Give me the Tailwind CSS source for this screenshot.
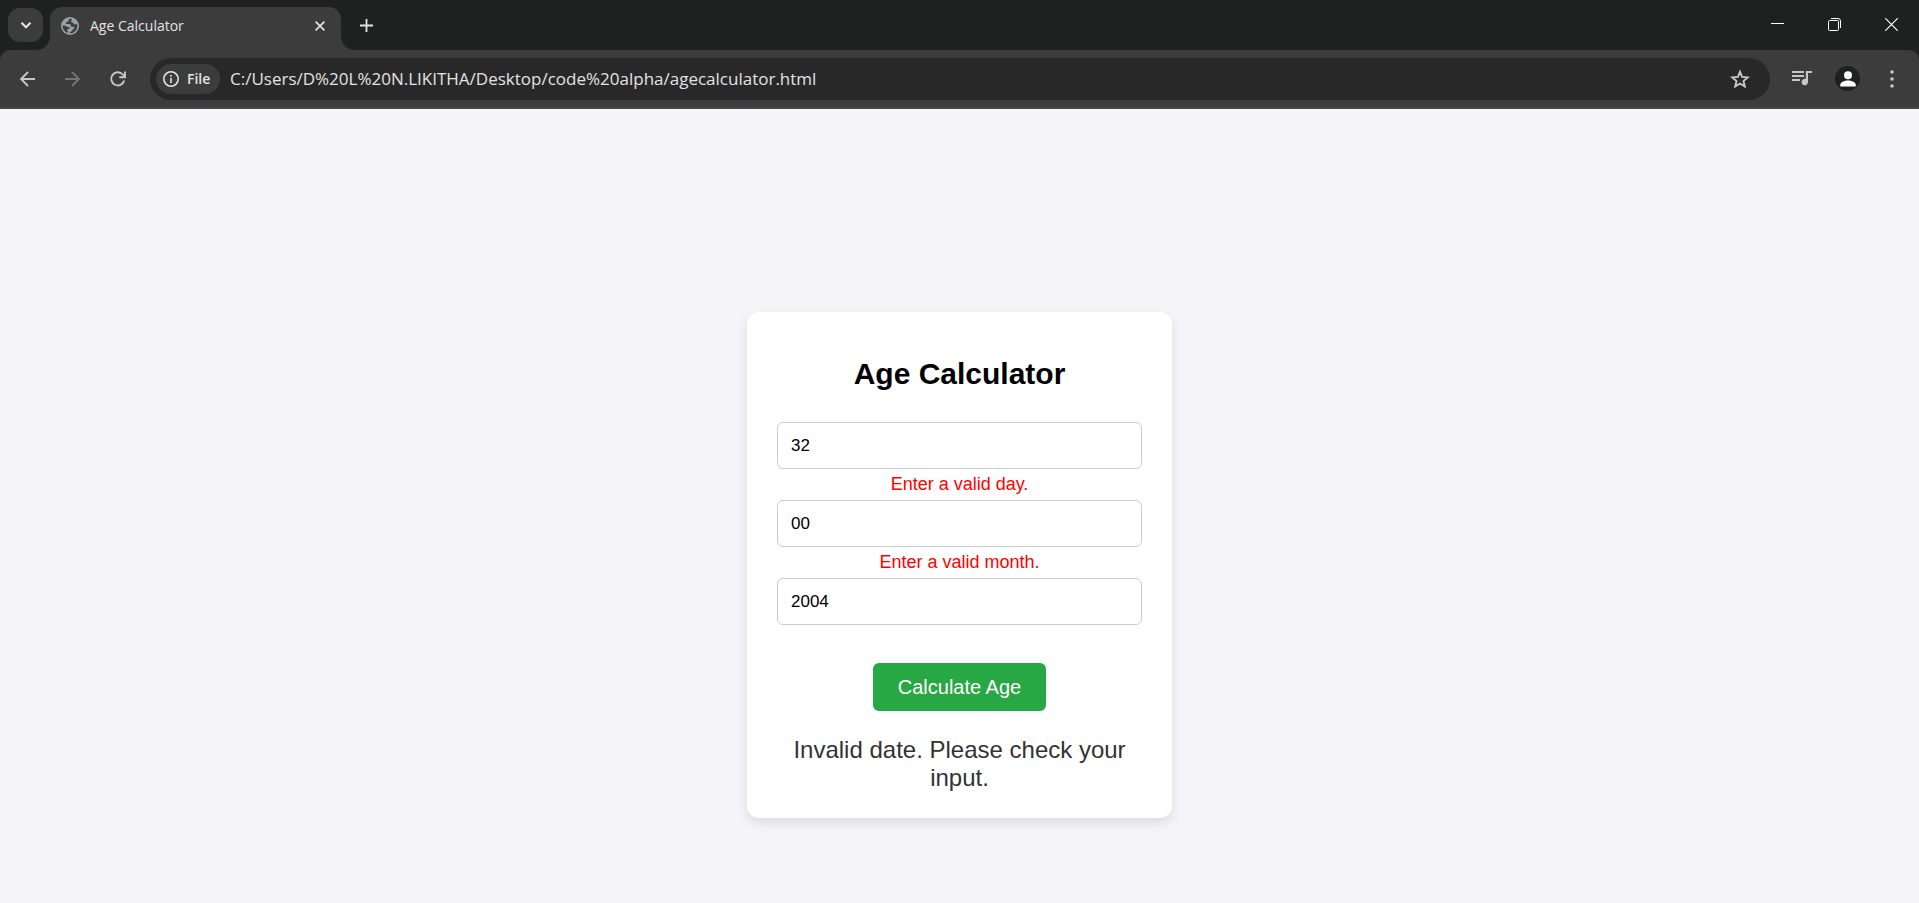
<!DOCTYPE html>
<html lang="en">
<head>
<meta charset="utf-8">
<meta name="viewport" content="width=device-width, initial-scale=1">
<title>Age Calculator</title>
<script src="https://cdn.jsdelivr.net/npm/@tailwindcss/browser@4"></script>
</head>
<body class="flex min-h-screen flex-col bg-[#1f2120] font-['Liberation_Sans',Arial,sans-serif]">
<header class="font-['Open_Sans',sans-serif] text-[#e3e3e3]">
  <!-- Tab strip -->
  <div class="flex h-[50px] items-center">
    <button aria-label="Search tabs" class="ml-2 grid h-[34px] w-[35px] place-items-center rounded-xl bg-[#3c3c3c]">
      <svg class="size-[12px]" viewBox="0 0 12 12" fill="none" stroke="currentColor" stroke-width="2.200"><path d="M1.500 3.800 6 8.200l4.500-4.400"/></svg>
    </button>
    <div class="relative ml-[7px] flex h-[43px] w-[291px] self-end items-center rounded-t-xl bg-[#3c3c3c] pb-[6px] pl-[11px] pr-[14px]">
      <svg class="absolute -left-[14px] bottom-0 size-[14px]" viewBox="0 0 14 14" fill="#3c3c3c"><path d="M14 0v14H0A14 14 0 0 0 14 0z"/></svg>
      <svg class="absolute -right-[14px] bottom-0 size-[14px]" viewBox="0 0 14 14" fill="#3c3c3c"><path d="M0 0v14h14A14 14 0 0 1 0 0z"/></svg>
      <svg class="size-[18px]" viewBox="0 0 18 18"><circle cx="9" cy="9" r="9" fill="#9aa0a6"/><path fill="#3c3c3c" d="M10.500 1.600C8.400 1.900 7.300 2.700 7.400 3.900c.1 1-.9 1-1.900 1.100-.9.200-.9 1.700 0 1.900h2.800c1.100 0 1.500.7 1.500 1.500s.8 1.300 1.700 1.300h1.200c.8 0 1 .8.600 1.500-.4.700-1.400.7-1.700 1.300-.3.800-.2 1.500-1.200 1.900-.9.400-1.700.8-2 1.900a7.300 7.300 0 0 0 7.900-7.300c0-.8-.1-1.500-.4-2.200-.5.700-1.700 1-2.500.6-.9-.4-.7-1.300-1.500-1.600-1-.3-1.700-.6-1.700-1.500 0-.9.900-1.600.3-2.700zM1.700 8.600a7.300 7.300 0 0 0 5.200 7.400c.3-.7.300-1.500-.2-1.900-.7-.5-.7-1.300-.2-1.800.5-.5 1.500-.4 2-.9.500-.6.300-1.400-.4-1.500-1-.1-1.900.1-2.600-.5-.7-.6-1-.8-3.800-.8z"/></svg>
      <span class="ml-[11px] flex-1 text-[14px] leading-5">Age Calculator</span>
      <button aria-label="Close tab" class="grid size-[14px] place-items-center"><svg class="size-[10px]" viewBox="0 0 10 10" fill="none" stroke="currentColor" stroke-width="1.700"><path d="m.6.6 8.800 8.800m0-8.800L.6 9.400"/></svg></button>
    </div>
    <button aria-label="New tab" class="ml-4 grid size-[18px] place-items-center"><svg class="size-[13px]" viewBox="0 0 13 13" fill="none" stroke="currentColor" stroke-width="1.800"><path d="M6.500 0v13M0 6.500h13"/></svg></button>
    <div class="ml-auto flex items-center gap-[29px] pr-[14px] pb-px text-white">
      <button aria-label="Minimize" class="grid size-7 place-items-center"><svg class="size-[13px]" viewBox="0 0 13 13" fill="currentColor"><path d="M0 5h13v1H0z"/></svg></button>
      <button aria-label="Restore" class="grid size-7 place-items-center"><svg class="size-[13px]" viewBox="0 0 13 13" fill="none" stroke="currentColor"><rect x=".5" y="2.500" width="10" height="10" rx="1"/><path d="M3 .5h7A2.500 2.500 0 0 1 12.500 3v7"/></svg></button>
      <button aria-label="Close window" class="grid size-7 place-items-center"><svg class="size-[13px]" viewBox="0 0 13 13" fill="none" stroke="currentColor" stroke-width="1.200"><path d="m.3.3 12.400 12.400m0-12.400L.3 12.700"/></svg></button>
    </div>
  </div>
  <!-- Toolbar -->
  <div class="flex h-[59px] items-center rounded-t-[10px] border-b-2 border-[#474747] bg-[#3c3c3c] pl-[18px] pr-[18px] text-[#c7c7c7]">
    <nav class="flex gap-[25px]" aria-label="Browser navigation">
      <button aria-label="Back"><svg class="size-5" viewBox="0 0 20 20" fill="none" stroke="currentColor" stroke-width="1.800"><path d="M17 10H3M10 3l-7 7 7 7"/></svg></button>
      <button aria-label="Forward" class="text-[#757575]" disabled><svg class="size-5" viewBox="0 0 20 20" fill="none" stroke="currentColor" stroke-width="1.800"><path d="M2 10h14M9 3l7 7-7 7"/></svg></button>
      <button aria-label="Reload"><svg class="size-5" viewBox="0 0 20 20" fill="none" stroke="currentColor" stroke-width="1.900"><path d="M16.200 11.500A6.600 6.600 0 1 1 14.800 5.500L16.500 7.500M17 2.500v5.700h-5.700"/></svg></button>
    </nav>
    <div class="ml-[22px] flex h-[42px] flex-1 items-center rounded-full bg-[#282828] pl-[6px] pr-[20px]">
      <button class="flex h-[30px] w-[64px] items-center gap-2 rounded-full bg-[#3c3c3c] pl-[7px] text-[14px] font-semibold text-[#e3e3e3]">
        <svg class="size-[16px]" viewBox="0 0 16 16" fill="none" stroke="currentColor" stroke-width="1.600"><circle cx="8" cy="8" r="7.200"/><path d="M8 7v5M8 4v1.700"/></svg>File
      </button>
      <input aria-label="Address" type="text" value="C:/Users/D%20L%20N.LIKITHA/Desktop/code%20alpha/agecalculator.html" class="ml-[10px] min-w-0 flex-1 bg-transparent text-[17px] leading-6 text-[#e3e3e3] outline-none">
      <button aria-label="Bookmark this page"><svg class="size-5" viewBox="0 0 20 20" fill="none" stroke="currentColor" stroke-width="1.900"><path d="m10 2.800 2.100 5.100 5.700.5-4.300 3.600 1.300 5.500-4.800-3-4.800 3 1.300-5.500-4.300-3.600 5.700-.5z"/></svg></button>
    </div>
    <button aria-label="Media controls" class="ml-[22px]"><svg class="size-[20px]" viewBox="0 0 20 20" fill="currentColor"><path d="M0 2h12v2H0zM0 6h12v2H0zM0 10h8v2H0zM13.800 2H20v2h-4v9a3.200 3.200 0 1 1-2.200-3z"/></svg></button>
    <button aria-label="Profile" class="ml-[23px] grid size-[25px] place-items-center rounded-full bg-[#1f2120] text-white"><svg class="size-[16px]" viewBox="0 0 16 16" fill="currentColor"><circle cx="8" cy="4.200" r="4"/><path d="M.3 15.500v-2c0-2.300 4-4 7.700-4s7.700 1.700 7.700 4v2z"/></svg></button>
    <button aria-label="Menu" class="ml-[23px]"><svg class="size-[18px]" viewBox="0 0 18 18" fill="currentColor"><circle cx="9" cy="2" r="1.800"/><circle cx="9" cy="9" r="1.800"/><circle cx="9" cy="16" r="1.800"/></svg></button>
  </div>
</header>
<main class="flex flex-1 items-center justify-center bg-[#f4f4f9] pt-[118px]">
  <form class="w-full max-w-[425px] rounded-xl bg-white px-[30px] pt-[44px] pb-[26px] text-center shadow-[0_5px_12px_rgba(0,0,0,0.1)]">
    <h1 class="text-[30px] leading-9 font-bold text-black">Age Calculator</h1>
    <div class="mt-[30px]">
      <input aria-label="Day" aria-describedby="day-error" type="text" inputmode="numeric" value="32" class="block h-[47px] w-full rounded-md border border-[#ccc] px-[13px] text-[17px] text-black">
      <p id="day-error" class="py-[5px] text-[18px] leading-[21px] text-[#ff0000]">Enter a valid day.</p>
      <input aria-label="Month" aria-describedby="month-error" type="text" inputmode="numeric" value="00" class="block h-[47px] w-full rounded-md border border-[#ccc] px-[13px] text-[17px] text-black">
      <p id="month-error" class="py-[5px] text-[18px] leading-[21px] text-[#ff0000]">Enter a valid month.</p>
      <input aria-label="Year" type="text" inputmode="numeric" value="2004" class="block h-[47px] w-full rounded-md border border-[#ccc] px-[13px] text-[17px] text-black">
    </div>
    <button type="button" class="mt-[38px] h-[48px] rounded-md bg-[#28a745] px-[25px] text-[20px] text-white">Calculate Age</button>
    <p class="mt-[25px] text-[24px] leading-7 text-[#333]">Invalid date. Please check your input.</p>
  </form>
</main>
</body>
</html>
